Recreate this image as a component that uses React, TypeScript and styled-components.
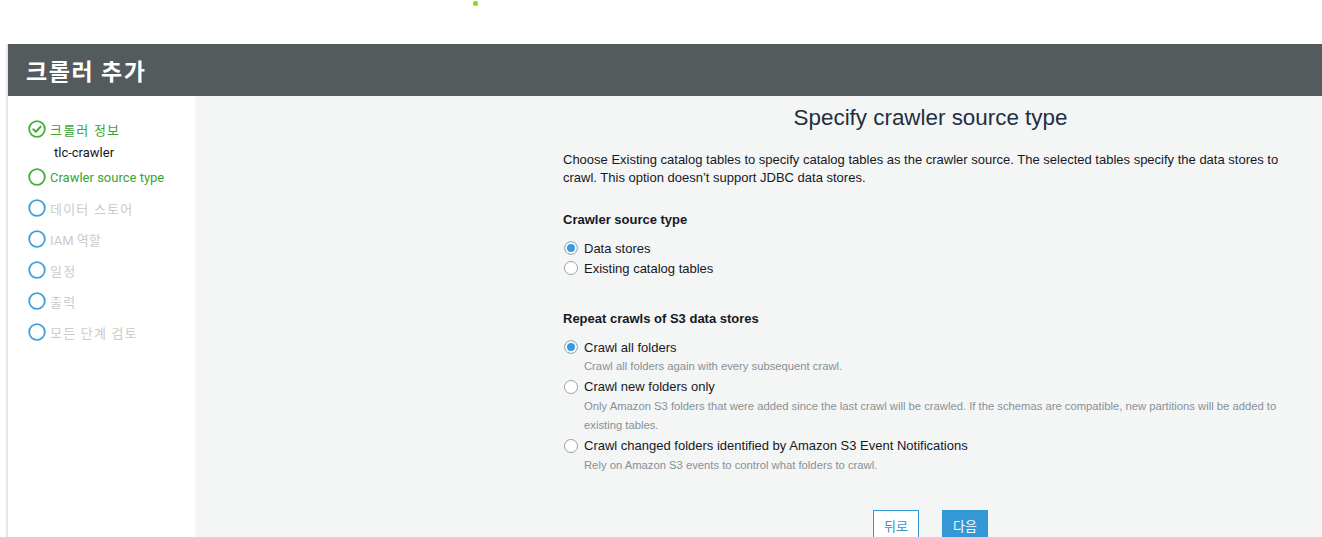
import React from "react";
import styled, { createGlobalStyle } from "styled-components";

const GlobalStyle = createGlobalStyle`
  html, body {
    margin: 0;
    padding: 0;
    background: #ffffff;
    font-family: "Liberation Sans", Arial, "Noto Sans CJK KR", sans-serif;
    overflow: hidden;
  }
`;

const Page = styled.div`
  width: 1322px;
  height: 537px;
  position: relative;
  overflow: hidden;
`;

const Dot = styled.span`
  position: absolute;
  left: 473px;
  top: 1px;
  width: 5px;
  height: 5px;
  border-radius: 50%;
  background: #8fd61a;
`;

const Frame = styled.div`
  margin-top: 44px;
  margin-left: 6px;
  border-left: 2px solid #e5e9e9;
  display: flex;
  flex-direction: column;
  height: 493px;
`;

const Header = styled.div`
  flex-shrink: 0;
  height: 52px;
  background: #545b5c;
  display: flex;
  align-items: center;
  padding-left: 18px;
  color: #ffffff;
  font-family: "Noto Sans CJK KR", sans-serif;
  font-size: 23px;
  font-weight: 700;
  letter-spacing: 1.6px;
`;

const Body = styled.div`
  flex: 1;
  display: flex;
  min-height: 0;
`;

const Sidebar = styled.ul`
  width: 187px;
  flex-shrink: 0;
  background: #ffffff;
  margin: 0;
  padding: 23px 0 0 19px;
  box-sizing: border-box;
  list-style: none;
  display: flex;
  flex-direction: column;
`;

type StepState = "done" | "current" | "pending";

const Step = styled.li<{ $state: StepState }>`
  display: flex;
  align-items: center;
  gap: 3px;
  height: 20px;
  margin-bottom: ${(p) => (p.$state === "done" ? "4px" : "11px")};
  font-family: "Roboto", "Noto Sans CJK KR", sans-serif;
  font-size: 13px;
  color: ${(p) => (p.$state === "pending" ? "#c9cbcd" : "#3aa334")};
  white-space: nowrap;
`;

const StepLabel = styled.span<{ $kr?: boolean }>`
  letter-spacing: ${(p) => (p.$kr ? "1.2px" : "0")};
`;

const SubLabel = styled.div`
  font-family: "Roboto", sans-serif;
  font-size: 13px;
  color: #16191f;
  padding-left: 27px;
  height: 19px;
  margin-top: 2px;
  margin-bottom: 3px;
`;

const Main = styled.main`
  flex: 1;
  background: #f4f5f5;
  padding: 8px 0 0 368px;
  box-sizing: border-box;
`;

const Column = styled.div`
  width: 735px;
  color: #16191f;
`;

const Title = styled.h1`
  margin: 0 0 19px;
  font-size: 22.4px;
  font-weight: 400;
  text-align: center;
  color: #232f3e;
  line-height: 28px;
`;

const Desc = styled.p`
  margin: 0 0 24px;
  font-size: 13px;
  line-height: 18px;
  color: #16191f;
`;

const SectionTitle = styled.h3`
  margin: 0 0 9px;
  font-size: 13px;
  font-weight: 700;
  line-height: 18px;
  color: #16191f;
`;

const OptionGroup = styled.div<{ $gap: number }>`
  display: flex;
  flex-direction: column;
  margin-bottom: ${(p) => p.$gap}px;
`;

const Option = styled.label`
  display: flex;
  align-items: center;
  gap: 6px;
  height: 20px;
  padding-left: 1px;
  font-size: 13px;
  color: #16191f;
`;

const Radio = styled.span<{ $checked?: boolean }>`
  width: 12px;
  height: 12px;
  border-radius: 50%;
  border: 1px solid ${(p) => (p.$checked ? "#aab7b8" : "#9ba2a3")};
  background: ${(p) => (p.$checked ? "#3b99e0" : "#ffffff")};
  box-shadow: ${(p) => (p.$checked ? "inset 0 0 0 2px #ffffff" : "none")};
  flex-shrink: 0;
`;

const Help = styled.div`
  padding-left: 21px;
  font-size: 11.25px;
  line-height: 19.5px;
  color: #879196;
`;

const Actions = styled.div`
  display: flex;
  justify-content: center;
  gap: 23px;
  margin-top: 35px;
`;

const Button = styled.button<{ $primary?: boolean }>`
  height: 30px;
  padding: 0 10px;
  font-family: "Noto Sans CJK KR", sans-serif;
  font-size: 13px;
  border: 1px solid #3399d6;
  background: ${(p) => (p.$primary ? "#3399d6" : "#ffffff")};
  color: ${(p) => (p.$primary ? "#ffffff" : "#3f8ec7")};
`;

function StepIcon({ state }: { state: StepState }) {
  const color = state === "pending" ? "#3f9fdd" : "#43ad3a";
  return (
    <svg width="20" height="20" viewBox="0 0 20 20">
      <circle cx="10" cy="10" r="7.8" fill="none" stroke={color} strokeWidth="1.8" />
      {state === "done" && (
        <path d="M6.3 10.2 L8.9 12.7 L13.6 7.6" fill="none" stroke={color} strokeWidth="2" strokeLinecap="round" strokeLinejoin="round" />
      )}
    </svg>
  );
}

const pending = ["데이터 스토어", "IAM 역할", "일정", "출력", "모든 단계 검토"];

export default function App() {
  return (
    <Page>
      <GlobalStyle />
      <Dot />
      <Frame>
        <Header>크롤러 추가</Header>
        <Body>
          <Sidebar>
            <Step $state="done">
              <StepIcon state="done" />
              <StepLabel $kr>크롤러 정보</StepLabel>
            </Step>
            <SubLabel>tlc-crawler</SubLabel>
            <Step $state="current">
              <StepIcon state="current" />
              <StepLabel>Crawler source type</StepLabel>
            </Step>
            {pending.map((label) => (
              <Step key={label} $state="pending">
                <StepIcon state="pending" />
                <StepLabel $kr={label !== "IAM 역할"}>{label}</StepLabel>
              </Step>
            ))}
          </Sidebar>
          <Main>
            <Column>
              <Title>Specify crawler source type</Title>
              <Desc>
                Choose Existing catalog tables to specify catalog tables as the crawler source. The selected tables
                specify the data stores to crawl. This option doesn’t support JDBC data stores.
              </Desc>
              <SectionTitle>Crawler source type</SectionTitle>
              <OptionGroup $gap={32}>
                <Option>
                  <Radio $checked />
                  Data stores
                </Option>
                <Option>
                  <Radio />
                  Existing catalog tables
                </Option>
              </OptionGroup>
              <SectionTitle>Repeat crawls of S3 data stores</SectionTitle>
              <OptionGroup $gap={0}>
                <Option>
                  <Radio $checked />
                  Crawl all folders
                </Option>
                <Help>Crawl all folders again with every subsequent crawl.</Help>
                <Option>
                  <Radio />
                  Crawl new folders only
                </Option>
                <Help>
                  Only Amazon S3 folders that were added since the last crawl will be crawled. If the schemas are
                  compatible, new partitions will be added to existing tables.
                </Help>
                <Option>
                  <Radio />
                  Crawl changed folders identified by Amazon S3 Event Notifications
                </Option>
                <Help>Rely on Amazon S3 events to control what folders to crawl.</Help>
              </OptionGroup>
              <Actions>
                <Button>뒤로</Button>
                <Button $primary>다음</Button>
              </Actions>
            </Column>
          </Main>
        </Body>
      </Frame>
    </Page>
  );
}
